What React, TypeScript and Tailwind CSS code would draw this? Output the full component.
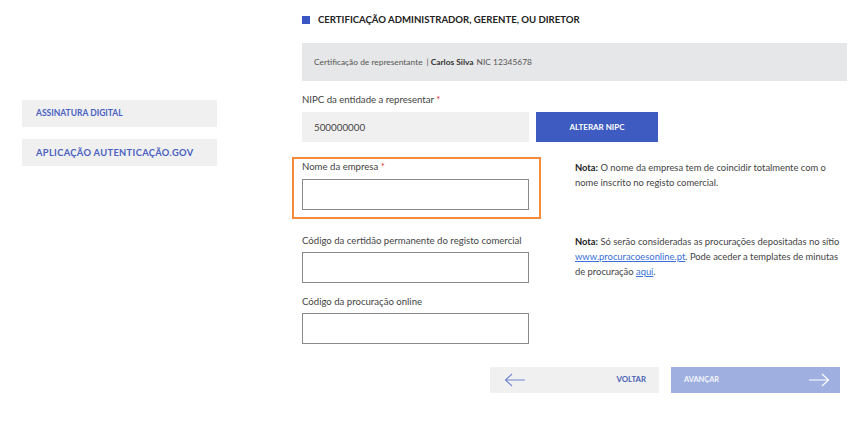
import React from "react";

function ArrowLeft({ className }: { className?: string }) {
  return (
    <svg width="22" height="14" viewBox="0 0 22 14" className={className} fill="none" stroke="currentColor" strokeWidth="1.1">
      <path d="M21 7H1.5M8 1L1.5 7L8 13" />
    </svg>
  );
}
function ArrowRight({ className }: { className?: string }) {
  return (
    <svg width="22" height="14" viewBox="0 0 22 14" className={className} fill="none" stroke="currentColor" strokeWidth="1.1">
      <path d="M1 7H20.5M14 1L20.5 7L14 13" />
    </svg>
  );
}

export default function App() {
  const font = { fontFamily: "Lato, 'Open Sans', sans-serif" };
  return (
    <div className="w-[867px] h-[422px] bg-white flex text-[#444]" style={font}>
      <aside className="ml-[22px] w-[195px] pt-[100px] flex flex-col gap-[12px]">
        <div className="h-[27px] bg-[#f0f0f0] pl-[14px] flex items-center text-[8.5px] font-bold text-[#4a5fc1] whitespace-nowrap">
          ASSINATURA DIGITAL
        </div>
        <div className="h-[27px] bg-[#f0f0f0] pl-[14px] flex items-center text-[9.3px] font-bold text-[#4a5fc1] tracking-[0.35px] whitespace-nowrap">
          APLICAÇÃO AUTENTICAÇÃO.GOV
        </div>
      </aside>

      <main className="ml-[85px] w-[545px] flex flex-col">
        <div className="mt-[13px] h-[14px] flex items-center gap-[8px]">
          <span className="w-[8px] h-[8px] bg-[#3a56c4] inline-block" />
          <span className="text-[9.6px] font-bold text-[#222] leading-[14px] whitespace-nowrap">
            CERTIFICAÇÃO ADMINISTRADOR, GERENTE, OU DIRETOR
          </span>
        </div>

        <div className="mt-[16px] h-[38px] bg-[#e6e7e8] pl-[12px] flex items-center text-[8.4px] text-[#555] whitespace-nowrap">
          <span>Certificação de representante</span>
          <span className="ml-[4px]">|</span>
          <span className="ml-[2px] font-bold text-[#333]">Carlos Silva</span>
          <span className="ml-[3px]">NIC 12345678</span>
        </div>

        <label className="mt-[12px] h-[14px] leading-[14px] text-[9.6px] text-[#444] whitespace-nowrap">
          NIPC da entidade a representar <span className="text-[#d33]">*</span>
        </label>
        <div className="mt-[5px] flex gap-[7px]">
          <div className="w-[227px] h-[30px] bg-[#f0f0f0] pl-[12px] flex items-center text-[9.8px] text-[#444]">
            500000000
          </div>
          <button className="w-[122px] h-[30px] bg-[#3d5bc0] text-white text-[8px] font-bold">
            ALTERAR NIPC
          </button>
        </div>

        <div className="mt-[15px] grid grid-cols-[227px_1fr] gap-x-[46px]">
          <div className="-ml-[10px] w-[249px] border-2 border-[#f58a3a] pl-[8px] pr-[10px] pt-[1px] pb-[7px] flex flex-col">
            <span className="h-[14px] leading-[14px] text-[9.6px] whitespace-nowrap">
              Nome da empresa <span className="text-[#d33]">*</span>
            </span>
            <div className="mt-[5px] h-[31px] border border-[#8a8a8a] bg-white" />
          </div>
          <p className="pt-[3px] text-[9.4px] leading-[15px] text-[#444]">
            <b className="text-[#222]">Nota:</b> O nome da empresa tem de coincidir totalmente com o nome inscrito no registo comercial.
          </p>

          <div className="mt-[15px] flex flex-col">
            <span className="h-[14px] leading-[14px] text-[9.6px] whitespace-nowrap">
              Código da certidão permanente do registo comercial
            </span>
            <div className="mt-[4px] h-[31px] border border-[#8a8a8a] bg-white" />
          </div>
          <p className="mt-[15px] text-[9.4px] leading-[15px] text-[#444]">
            <b className="text-[#222]">Nota:</b> Só serão consideradas as procurações depositadas no sítio{" "}
            <a className="text-[#3a6fd8] underline">www.procuracoesonline.pt</a>. Pode aceder a templates de minutas de procuração{" "}
            <a className="text-[#3a6fd8] underline">aqui</a>.
          </p>

          <div className="mt-[12px] flex flex-col">
            <span className="h-[14px] leading-[14px] text-[9.6px] whitespace-nowrap">Código da procuração online</span>
            <div className="mt-[4px] h-[31px] border border-[#8a8a8a] bg-white" />
          </div>
          <div />
        </div>

        <div className="mt-[23px] mr-[7px] flex justify-end gap-[12px]">
          <button className="w-[169px] h-[26px] bg-[#f0f0f0] flex items-center justify-between pl-[14px] pr-[13px] text-[#6f84cf]">
            <ArrowLeft />
            <span className="text-[7.8px] font-bold text-[#4a5fb5]">VOLTAR</span>
          </button>
          <button className="w-[169px] h-[26px] bg-[#9fb0e0] flex items-center justify-between pl-[13px] pr-[10px] text-white">
            <span className="text-[7.4px] font-bold text-[#f4f6fc]">AVANÇAR</span>
            <ArrowRight />
          </button>
        </div>
      </main>
    </div>
  );
}
